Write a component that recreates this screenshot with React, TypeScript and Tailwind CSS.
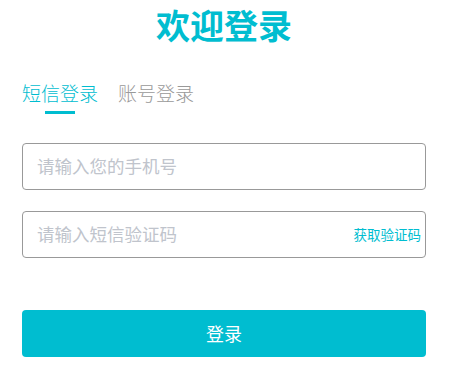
import React, { useState } from "react";

const LoginPanel = () => {
  const [tab, setTab] = useState(0);

  return (
    <div
      className="mx-[22px] w-[404px] pt-[8px]"
      style={{ fontFamily: '"Noto Sans CJK SC", "Noto Sans", sans-serif' }}
    >
      <h1 className="text-center text-[34px] font-bold leading-[34px] text-[#00bdd0]">
        欢迎登录
      </h1>

      {/* tabs */}
      <div className="mt-[41px] flex gap-[20px]">
        {["短信登录", "账号登录"].map((label, i) => (
          <div key={label} className="flex flex-col items-center">
            <button
              onClick={() => setTab(i)}
              className={`text-[19px] font-light leading-[19px] ${
                tab === i ? "text-[#00bdd0]" : "text-[#999999]"
              }`}
            >
              {label}
            </button>
            <div
              className={`mt-[9px] h-[3px] w-[30px] ${
                tab === i ? "bg-[#00bdd0]" : "bg-transparent"
              }`}
            />
          </div>
        ))}
      </div>

      <div className="mt-[29px] flex flex-col gap-[21px]">
        <div className="flex h-[47px] items-center rounded-[4px] border border-[#999999] pl-[14px] pr-[4px]">
          <input
            className="w-full bg-transparent text-[17.5px] outline-none placeholder:text-[#c0c4cc]"
            placeholder="请输入您的手机号"
          />
        </div>
        <div className="flex h-[47px] items-center rounded-[4px] border border-[#999999] pl-[14px] pr-[4px]">
          <input
            className="min-w-0 flex-1 bg-transparent text-[17.5px] outline-none placeholder:text-[#c0c4cc]"
            placeholder="请输入短信验证码"
          />
          <span className="shrink-0 cursor-pointer text-[13.5px] text-[#00bdd0]">
            获取验证码
          </span>
        </div>
      </div>

      <button className="mt-[52px] h-[47px] w-full rounded-[4px] bg-[#00bdd0] text-[18px] text-white">
        登录
      </button>
    </div>
  );
};

export default function App() {
  return (
    <div className="h-[373px] w-[452px] bg-white">
      <LoginPanel />
    </div>
  );
}
